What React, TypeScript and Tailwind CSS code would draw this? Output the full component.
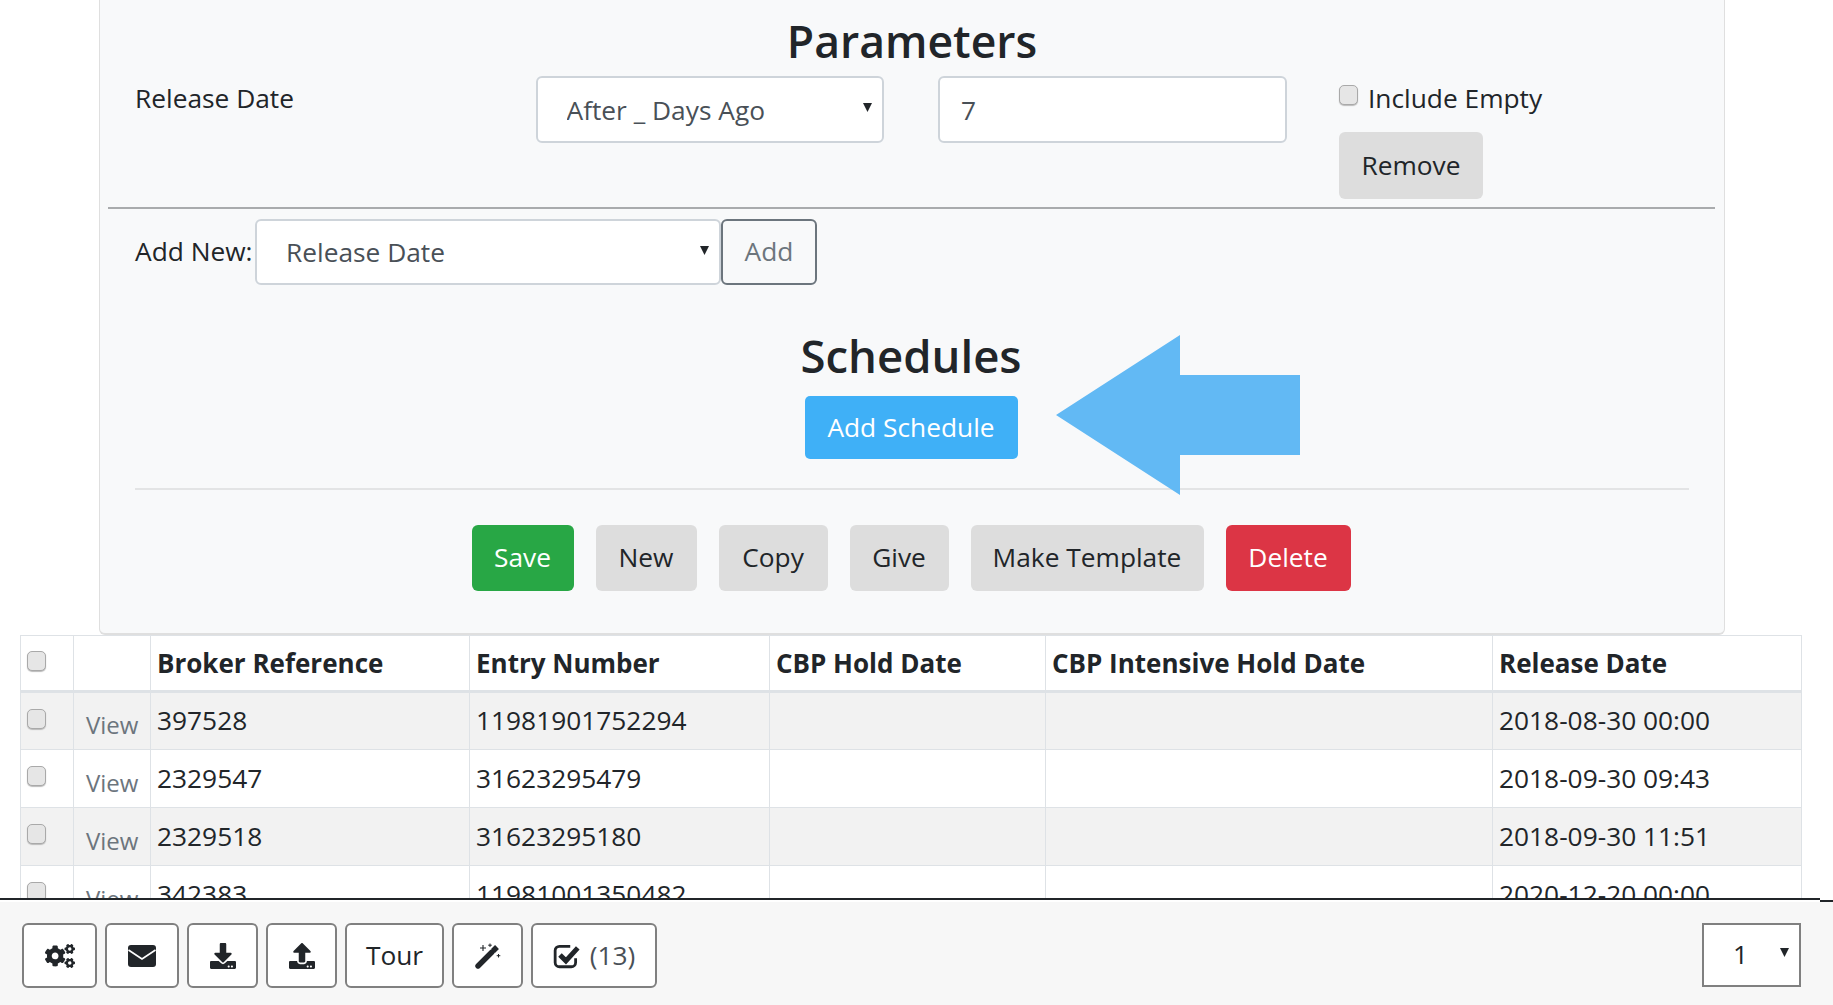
import React from "react";
import { FaCogs, FaDownload, FaUpload } from "react-icons/fa";

const font = "font-['Open_Sans','Liberation_Sans',sans-serif]";

const rows = [
    { broker: "397528", entry: "11981901752294", release: "2018-08-30 00:00" },
    { broker: "2329547", entry: "31623295479", release: "2018-09-30 09:43" },
    { broker: "2329518", entry: "31623295180", release: "2018-09-30 11:51" },
    { broker: "342383", entry: "11981001350482", release: "2020-12-20 00:00" },
];

const actions = [
    { label: "Save", cls: "w-[102px] bg-[#28a745] text-white" },
    { label: "New", cls: "w-[101px] bg-[#dddddd] text-[#212529]" },
    { label: "Copy", cls: "w-[109px] bg-[#dddddd] text-[#212529]" },
    { label: "Give", cls: "w-[99px] bg-[#dddddd] text-[#212529]" },
    { label: "Make Template", cls: "w-[233px] bg-[#dddddd] text-[#212529]" },
    { label: "Delete", cls: "w-[125px] bg-[#dc3545] text-white" },
];

function Check({ className = "" }: { className?: string }) {
    return (
        <input
            type="checkbox"
            className={`block appearance-none w-[19px] h-[20px] rounded-[5px] border border-[#a9a9a9] bg-[#e6e6e6] shadow-[0_1px_1px_#bbbbbb] ${className}`}
        />
    );
}

function Caret({ className = "" }: { className?: string }) {
    return (
        <svg viewBox="0 0 10 10" className={`pointer-events-none absolute w-[9px] h-[9px] fill-[#212529] ${className}`}>
            <path d="M0 0 H10 L5 10 Z" />
        </svg>
    );
}

function SelectBox({ value, className, textClass }: { value: string; className: string; textClass: string }) {
    return (
        <div className={`relative ${className}`}>
            <select defaultValue={value} className={`appearance-none w-full h-full bg-white outline-none ${textClass}`}>
                <option>{value}</option>
            </select>
            <Caret className="right-[12px] top-[27px]" />
        </div>
    );
}

function ToolButton({ width, children }: { width: string; children: React.ReactNode }) {
    return (
        <button type="button" className={`${width} h-[65px] flex items-center justify-center gap-[9px] bg-white border-2 border-[#808080] rounded-[6px] text-[#212529]`}>
            {children}
        </button>
    );
}

function EnvelopeIcon() {
    return (
        <svg viewBox="0 0 28 22" className="w-[28px] h-[22px]">
            <rect width="28" height="22" rx="3" fill="#212529" />
            <path d="M0.5 5 L14 14 L27.5 5" fill="none" stroke="#fff" strokeWidth="1.6" />
        </svg>
    );
}

function WandIcon() {
    return (
        <svg viewBox="0 0 26 26" className="w-[26px] h-[26px]">
            <path d="M3 23 L17 9" stroke="#212529" strokeWidth="5.4" strokeLinecap="round" />
            <path d="M18 8 L22 4" stroke="#212529" strokeWidth="5.4" />
            <path d="M8 2 V8 M5 5 H11" stroke="#212529" strokeWidth="1.1" />
            <path d="M15 0.5 V4 M13.2 2.2 H16.8" stroke="#212529" strokeWidth="1" />
            <path d="M23.5 11 V14.5 M21.7 12.7 H25.3" stroke="#212529" strokeWidth="1" />
        </svg>
    );
}

function CheckSquareIcon() {
    return (
        <svg viewBox="0 0 26 24" className="w-[28px] h-[26px]">
            <path d="M16 3 H6 A4 4 0 0 0 2 7 V18 A4 4 0 0 0 6 22 H17 A4 4 0 0 0 21 18 V14" fill="none" stroke="#212529" strokeWidth="2.6" />
            <path d="M6.5 11 L12 16.5 L23 4.5" fill="none" stroke="#212529" strokeWidth="4.6" />
        </svg>
    );
}

export default function App() {
    return (
        <div className={`h-[1005px] flex flex-col overflow-hidden bg-white text-[26.3px] text-[#212529] ${font}`}>
            <div className="h-[898px] overflow-hidden shrink-0">
                <div className="ml-[99px] w-[1626px] h-[635px] bg-[#f8f9fa] border-x border-b-2 border-[#dfdfdf] rounded-b-[6px]">
                    <h2 className="pt-[12px] h-[70px] text-center text-[44.5px] leading-[58px] font-semibold">Parameters</h2>
                    <div className="mt-[6px] ml-[8px] mr-[9px] grid grid-cols-[400.5px_402.5px_401px_1fr] h-[133px] border-b-2 border-[#a9abad]">
                        <div className="px-[27px] pt-[4px] leading-[36px]">Release Date</div>
                        <div className="px-[27px]">
                            <SelectBox
                                value="After _ Days Ago"
                                className="w-[348px] h-[67px]"
                                textClass="pl-[29px] pt-[2px] rounded-[6px] border-2 border-[#ced4da] text-[#495057]"
                            />
                        </div>
                        <div className="px-[27px]">
                            <input
                                type="text"
                                defaultValue="7"
                                className="w-[349px] h-[67px] pl-[21px] bg-white rounded-[6px] border-2 border-[#ced4da] text-[#495057] outline-none"
                            />
                        </div>
                        <div className="px-[27px] pt-[4px]">
                            <div className="flex gap-[10px] leading-[36px]">
                                <Check className="mt-[5px]" />
                                <span>Include Empty</span>
                            </div>
                            <button type="button" className="mt-[16px] w-[144px] h-[67px] bg-[#dddddd] rounded-[6px]">Remove</button>
                        </div>
                    </div>
                    <div className="mt-[9px] ml-[35px] flex items-center h-[67px]">
                        <span className="w-[120px] whitespace-nowrap">Add New:</span>
                        <SelectBox
                            value="Release Date"
                            className="w-[466px] h-[66px]"
                            textClass="pl-[29px] pt-[2px] rounded-[6px] border-2 border-[#ced4da] text-[#495057]"
                        />
                        <button type="button" className="w-[96px] h-[66px] rounded-[6px] border-2 border-[#6c757d] text-[#6c757d]">Add</button>
                    </div>
                    <div className="relative mt-[41px] mx-[35px] pr-[2px] h-[164px] border-b-2 border-[#e3e4e5] flex flex-col items-center">
                        <h2 className="h-[58px] text-center text-[45.5px] leading-[58px] font-semibold">Schedules</h2>
                        <button type="button" className="w-[213px] h-[63px] mt-[12px] rounded-[5px] bg-[#3fb0f7] text-white">Add Schedule</button>
                        {/* annotation arrow pointing at the button */}
                        <svg viewBox="0 0 244 160" className="absolute left-[921px] top-[9px] w-[244px] h-[160px] fill-[#62b9f4]">
                            <path d="M0 80 L124 0 V40 H244 V120 H124 V160 Z" />
                        </svg>
                    </div>
                    <div className="mt-[35px] pr-[2px] flex justify-center gap-[22px]">
                        {actions.map((a) => (
                            <button key={a.label} type="button" className={`h-[66px] rounded-[6px] ${a.cls}`}>{a.label}</button>
                        ))}
                    </div>
                </div>
                <table className="ml-[20px] w-[1781px] table-fixed border-collapse">
                    <colgroup>
                        <col className="w-[53px]" />
                        <col className="w-[77px]" />
                        <col className="w-[319px]" />
                        <col className="w-[300px]" />
                        <col className="w-[276px]" />
                        <col className="w-[447px]" />
                        <col className="w-[309px]" />
                    </colgroup>
                    <thead>
                        <tr className="h-[56px] border-t border-b-[3px] border-[#dee2e6] text-[26px]">
                            <th className="border-x border-[#dee2e6] pl-[6px] align-top pt-[15px]"><Check /></th>
                            <th className="border-x border-[#dee2e6]"></th>
                            {["Broker Reference", "Entry Number", "CBP Hold Date", "CBP Intensive Hold Date", "Release Date"].map((h) => (
                                <th key={h} className="border-x border-[#dee2e6] pl-[6px] text-left font-bold whitespace-nowrap">{h}</th>
                            ))}
                        </tr>
                    </thead>
                    <tbody>
                        {rows.map((r, i) => (
                            <tr key={r.broker} className={`h-[58px] border-b border-[#dee2e6] ${i % 2 === 0 ? "bg-[#f2f2f2]" : "bg-white"}`}>
                                <td className="border-x border-[#dee2e6] pl-[6px] align-top pt-[16px]"><Check /></td>
                                <td className="border-x border-[#dee2e6] pl-[12px] pt-[8px] text-[24px] text-[#6c757d]">View</td>
                                <td className="border-x border-[#dee2e6] pl-[6px]">{r.broker}</td>
                                <td className="border-x border-[#dee2e6] pl-[6px]">{r.entry}</td>
                                <td className="border-x border-[#dee2e6]"></td>
                                <td className="border-x border-[#dee2e6]"></td>
                                <td className="border-x border-[#dee2e6] pl-[6px]">{r.release}</td>
                            </tr>
                        ))}
                    </tbody>
                </table>
            </div>
            <div className="flex shrink-0">
                <div className="w-[1820px] h-[2px] bg-[#212529]"></div>
                <div className="flex-1 h-[2px] mt-[2px] bg-[#212529]"></div>
            </div>
            <div className="flex-1 bg-[#f7f7f7] pl-[22px] pr-[32px] pt-[21px] flex items-start justify-between">
                <div className="flex gap-[8px]">
                    <ToolButton width="w-[75px]"><FaCogs size={30} /></ToolButton>
                    <ToolButton width="w-[74px]"><EnvelopeIcon /></ToolButton>
                    <ToolButton width="w-[71px]"><FaDownload size={26} /></ToolButton>
                    <ToolButton width="w-[71px]"><FaUpload size={26} /></ToolButton>
                    <ToolButton width="w-[99px]">Tour</ToolButton>
                    <ToolButton width="w-[71px]"><WandIcon /></ToolButton>
                    <ToolButton width="w-[126px]"><CheckSquareIcon /><span className="text-[#495057]">(13)</span></ToolButton>
                </div>
                <div className="relative w-[99px] h-[64px]">
                    <select defaultValue="1" className="appearance-none w-full h-full pl-[29px] bg-white border-2 border-[#808080] outline-none">
                        <option>1</option>
                    </select>
                    <Caret className="right-[12px] top-[25px]" />
                </div>
            </div>
        </div>
    );
}
